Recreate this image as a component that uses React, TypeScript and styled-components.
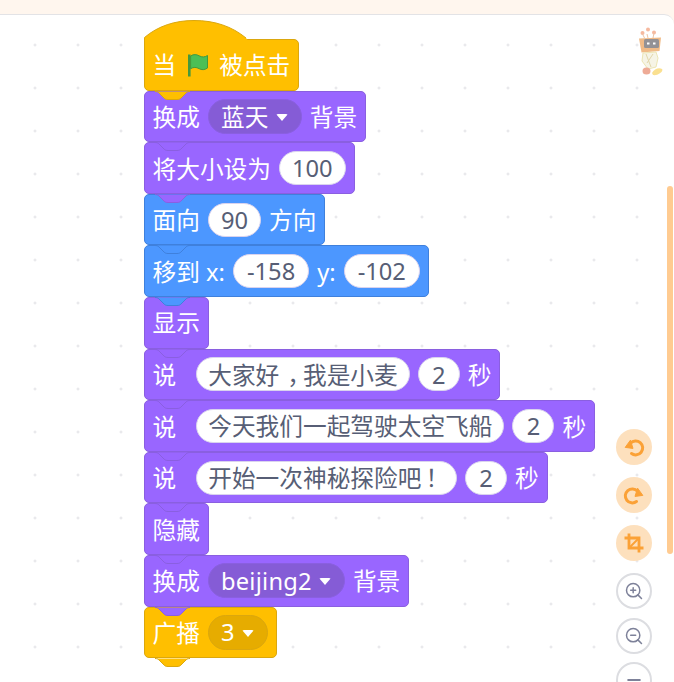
import React from "react";
import styled, {createGlobalStyle} from "styled-components";
import {Minus, ZoomIn, ZoomOut} from "lucide-react";

const GlobalStyle = createGlobalStyle`
  html, body {
    margin: 0;
    padding: 0;
    height: 682px;
    overflow: hidden;
    background: #fff;
    font-family: "Noto Sans", "Noto Sans CJK SC", sans-serif;
  }
`

const Page = styled.div`
  position: relative;
  width: 674px;
  height: 682px;
  overflow: hidden;
  background: #fff6ee;
`
const Canvas = styled.main`
  position: relative;
  box-sizing: border-box;
  height: 668px;
  margin-top: 14px;
  padding: 24px 0 0 144px;
  display: flex;
  flex-direction: column;
  align-items: flex-start;
  border-top: 1px solid #e3e3e6;
  border-top-right-radius: 10px;
  background-color: #fff;
  background-image: radial-gradient(circle, #e2e2e6 1px, transparent 1.4px);
  background-size: 43px 43px;
  background-position: 13.5px 8.5px;
`

const palette = {
    purple: {fill: "#9966ff", line: "#8a5fe0", menu: "#855cd6"},
    blue: {fill: "#4c97ff", line: "#3f80dc", menu: "#4280d7"},
    yellow: {fill: "#ffbf00", line: "#dba70e", menu: "#e6ac00"},
}
type Tone = keyof typeof palette

const BlockRow = styled.div<{ $tone: Tone; $order: number; $hat?: boolean }>`
  position: relative;
  z-index: ${props => props.$order};
  box-sizing: border-box;
  height: 51.6px;
  flex: none;
  display: flex;
  align-items: center;
  gap: 8px;
  padding: 0 8px 0 7.5px;
  background: ${props => palette[props.$tone].fill};
  border: 1px solid ${props => palette[props.$tone].line};
  border-radius: ${props => props.$hat ? "0 5px 5px 5px" : "5px"};
  color: #fff;
  font-size: 23.7px;
  line-height: 1;
  white-space: nowrap;
`
const Label = styled.span<{ $wide?: boolean }>`
  padding-top: 3px;
  margin-right: ${props => props.$wide ? "12px" : "0"};
`
const NumberPill = styled.span<{ $pad?: number }>`
  box-sizing: border-box;
  height: 34px;
  min-width: 42px;
  padding: 2px ${props => props.$pad ?? 12}px 0;
  display: flex;
  align-items: center;
  justify-content: center;
  background: #fff;
  border: 1px solid #d9d3ee;
  border-radius: 17px;
  color: #575e75;
`
const Mark = styled.span<{ $shift: number }>`
  padding-left: ${props => props.$shift}px;
  letter-spacing: -${props => props.$shift}px;
`
const MenuPill = styled.span<{ $tone: Tone }>`
  box-sizing: border-box;
  height: 35px;
  padding: 2px 13px 0 12px;
  display: flex;
  align-items: center;
  gap: 7px;
  background: ${props => palette[props.$tone].menu};
  border: 1px solid ${props => palette[props.$tone].line};
  border-radius: 17.5px;
  color: #fff;
  letter-spacing: 0.25px;
`
const Caret = styled.i`
  width: 0;
  height: 0;
  border-left: 6px solid transparent;
  border-right: 6px solid transparent;
  border-top: 7px solid #fff;
  border-radius: 2px;
`
const NotchShape = styled.svg`
  position: absolute;
  left: 10px;
  bottom: -10px;
  overflow: visible;
`
const HatShape = styled.svg`
  position: absolute;
  left: -1px;
  top: -20px;
  overflow: visible;
`
const FlagIcon = styled.svg`
  flex: none;
  margin: 0 2px 0 2px;
`

const Mascot = styled.svg`
  position: absolute;
  top: 12px;
  right: 10px;
  opacity: 0.75;
`
const ScrollThumb = styled.div`
  position: absolute;
  top: 171px;
  right: 1px;
  width: 6px;
  height: 368px;
  border-radius: 3px;
  background: #ffcb91;
`
const ToolColumn = styled.div`
  position: absolute;
  top: 414px;
  left: 616px;
  display: flex;
  flex-direction: column;
  gap: 12px;
`
const ToolStack = styled.div<{ $outlined?: boolean }>`
  display: flex;
  flex-direction: column;
  gap: ${props => props.$outlined ? "8.5px" : "12px"};
`
const OrangeTool = styled.button`
  box-sizing: border-box;
  width: 36px;
  height: 36px;
  padding: 0;
  display: flex;
  align-items: center;
  justify-content: center;
  border: none;
  border-radius: 50%;
  background: #fde0bd;
  color: #fba136;
`
const PlainTool = styled(OrangeTool)`
  background: #fff;
  border: 2px solid #dcdde1;
  color: #7d8199;
`

const NOTCH_EDGE = "M0 .5c2 0 3 .5 4 1.500l5 5c1 1 2 1.500 4 1.500h9c2 0 3-.5 4-1.500l5-5c1-1 2-1.500 4-1.500"

const Notch = ({tone}: { tone: Tone }) => (
    <NotchShape width="35" height="9" viewBox="0 0 35 9">
        <path d={NOTCH_EDGE + "z"} fill={palette[tone].fill}/>
        <path d={NOTCH_EDGE} fill="none" stroke={palette[tone].line}/>
    </NotchShape>
)

const Flag = () => (
    <FlagIcon width="23" height="25" viewBox="0 0 23 25">
        <path d="M2 2.500h2.600V24.500H2z" fill="#45993d"/>
        <path
            d="M4.600 4c3-2 6-1.600 8.500-.2 3 1.600 5.600 1.500 8.400-.3v12.500c-2.800 2-5.700 2.200-8.500.6-2.700-1.500-5.500-1.700-8.400.1z"
            fill="#4cbf56"
            stroke="#45993d"
        />
    </FlagIcon>
)

const Robot = () => (
    <Mascot width="26" height="52" viewBox="0 0 26 52">
        <g fill="#f3a27f">
            <circle cx="4.500" cy="6" r="2"/>
            <circle cx="10" cy="2.500" r="2"/>
            <circle cx="16" cy="5.500" r="2"/>
        </g>
        <path d="M9 7l1 4M4.500 7l2 4M16 6l-1 5" stroke="#e9b08a" fill="none"/>
        <path d="M1 11.500l22-1-1.500 13.500-18 1.500z" fill="#eca45f"/>
        <rect x="6" y="12" width="15" height="9" rx="1.500" fill="#6f6d72"/>
        <rect x="9" y="15.500" width="2.500" height="2" fill="#fff"/>
        <rect x="15" y="15.500" width="2.500" height="2" fill="#fff"/>
        <path d="M5 26l13-1 2 6-2 9-8 2-6-8z" fill="#f3f1de" stroke="#e6dd9c"/>
        <path d="M8 27l5 13M15 27l-6 9" stroke="#d9c98e" fill="none"/>
        <ellipse cx="8.500" cy="44" rx="4" ry="3.500" fill="#e98f74"/>
        <path d="M14 46c2-4 7-6 10-4 2 2-4 7-9 6z" fill="#f9d66c"/>
    </Mascot>
)

const TurnLeft = () => (
    <svg width="22" height="22" viewBox="0 0 22 22">
        <path d="M7.500 7.200a7 7 0 1 1 1 10.300" fill="none" stroke="currentColor" strokeWidth="3" strokeLinecap="round"/>
        <path d="M2.200 11.400l7.800 1-2.600-8.200z" fill="currentColor" stroke="currentColor" strokeLinejoin="round"/>
    </svg>
)

const TurnRight = () => (
    <svg width="22" height="22" viewBox="0 0 22 22">
        <path d="M14.500 7.200a7 7 0 1 0-1 10.300" fill="none" stroke="currentColor" strokeWidth="3" strokeLinecap="round"/>
        <path d="M19.800 11.400l-7.800 1 2.600-8.200z" fill="currentColor" stroke="currentColor" strokeLinejoin="round"/>
    </svg>
)

const CropFrame = () => (
    <svg width="20" height="20" viewBox="0 0 20 20" fill="none" stroke="currentColor" strokeWidth="2.800">
        <path d="M5 .5V15h14.500"/>
        <path d="M.5 5H15v14.500"/>
        <path d="M5 15L15 5" strokeWidth="2"/>
    </svg>
)

const App = () => (
    <>
        <GlobalStyle/>
        <Page>
            <Canvas>
                <BlockRow $tone="yellow" $order={12} $hat>
                    <HatShape width="105" height="21" viewBox="0 0 105 21">
                        <path d="M.5 20.500V17.500C14 6 31 .5 50 .5c21 0 38 6 52 17.500l2 2.500z" fill="#ffbf00"/>
                        <path d="M.5 20.500V17.500C14 6 31 .5 50 .5c21 0 38 6 52 17.500" fill="none" stroke="#dba70e"/>
                    </HatShape>
                    <Label>当</Label>
                    <Flag/>
                    <Label>被点击</Label>
                    <Notch tone="yellow"/>
                </BlockRow>

                <BlockRow $tone="purple" $order={11}>
                    <Label>换成</Label>
                    <MenuPill $tone="purple">蓝天<Caret/></MenuPill>
                    <Label>背景</Label>
                    <Notch tone="purple"/>
                </BlockRow>

                <BlockRow $tone="purple" $order={10}>
                    <Label>将大小设为</Label>
                    <NumberPill>100</NumberPill>
                    <Notch tone="purple"/>
                </BlockRow>

                <BlockRow $tone="blue" $order={9}>
                    <Label>面向</Label>
                    <NumberPill>90</NumberPill>
                    <Label>方向</Label>
                    <Notch tone="blue"/>
                </BlockRow>

                <BlockRow $tone="blue" $order={8}>
                    <Label>移到 x:</Label>
                    <NumberPill $pad={13}>-158</NumberPill>
                    <Label>y:</Label>
                    <NumberPill $pad={13}>-102</NumberPill>
                    <Notch tone="blue"/>
                </BlockRow>

                <BlockRow $tone="purple" $order={7}>
                    <Label>显示</Label>
                    <Notch tone="purple"/>
                </BlockRow>

                <BlockRow $tone="purple" $order={6}>
                    <Label $wide>说</Label>
                    <NumberPill $pad={11}>大家好<Mark $shift={8}>，</Mark>我是小麦</NumberPill>
                    <NumberPill>2</NumberPill>
                    <Label>秒</Label>
                    <Notch tone="purple"/>
                </BlockRow>

                <BlockRow $tone="purple" $order={5}>
                    <Label $wide>说</Label>
                    <NumberPill $pad={11}>今天我们一起驾驶太空飞船</NumberPill>
                    <NumberPill>2</NumberPill>
                    <Label>秒</Label>
                    <Notch tone="purple"/>
                </BlockRow>

                <BlockRow $tone="purple" $order={4}>
                    <Label $wide>说</Label>
                    <NumberPill $pad={11}>开始一次神秘探险吧<Mark $shift={4}>！</Mark></NumberPill>
                    <NumberPill>2</NumberPill>
                    <Label>秒</Label>
                    <Notch tone="purple"/>
                </BlockRow>

                <BlockRow $tone="purple" $order={3}>
                    <Label>隐藏</Label>
                    <Notch tone="purple"/>
                </BlockRow>

                <BlockRow $tone="purple" $order={2}>
                    <Label>换成</Label>
                    <MenuPill $tone="purple">beijing2<Caret/></MenuPill>
                    <Label>背景</Label>
                    <Notch tone="purple"/>
                </BlockRow>

                <BlockRow $tone="yellow" $order={1}>
                    <Label>广播</Label>
                    <MenuPill $tone="yellow">3<Caret/></MenuPill>
                    <Notch tone="yellow"/>
                </BlockRow>

                <Robot/>
                <ScrollThumb/>
                <ToolColumn>
                    <ToolStack>
                        <OrangeTool><TurnLeft/></OrangeTool>
                        <OrangeTool><TurnRight/></OrangeTool>
                        <OrangeTool><CropFrame/></OrangeTool>
                    </ToolStack>
                    <ToolStack $outlined>
                        <PlainTool><ZoomIn size={20} strokeWidth={1.8}/></PlainTool>
                        <PlainTool><ZoomOut size={20} strokeWidth={1.8}/></PlainTool>
                        <PlainTool><Minus size={20} strokeWidth={2.4}/></PlainTool>
                    </ToolStack>
                </ToolColumn>
            </Canvas>
        </Page>
    </>
)

export default App
